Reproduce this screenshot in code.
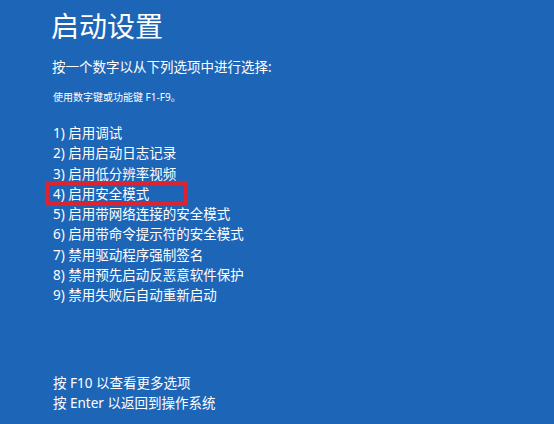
const options = [
    '1) 启用调试',
    '2) 启用启动日志记录',
    '3) 启用低分辨率视频',
    '4) 启用安全模式',
    '5) 启用带网络连接的安全模式',
    '6) 启用带命令提示符的安全模式',
    '7) 禁用驱动程序强制签名',
    '8) 禁用预先启动反恶意软件保护',
    '9) 禁用失败后自动重新启动',
]

export default function App() {
    return (
        <main
            className="w-[554px] h-[424px] overflow-hidden bg-[#1d65b7] text-white pl-[51px] pt-[10px]"
            style={{ fontFamily: '"Noto Sans", "Noto Sans CJK SC", sans-serif' }}
        >
            <h1 className="text-[28px] leading-[32px] font-normal">启动设置</h1>
            <p className="mt-[15px] text-[13.5px] leading-[20px] pl-[1px]">按一个数字以从下列选项中进行选择:</p>
            <p className="mt-[13px] text-[10px] leading-[14px] pl-[2px]">使用数字键或功能键 F1-F9。</p>

            <ul className="mt-[19px] pl-[2px]">
                {options.map((o, i) => (
                    <li key={o} className="text-[13.5px] leading-[20.3px]">
                        {i === 3 ? (
                            <span className="relative inline-block">
                                {o}
                                {/* highlight box drawn over the selected option */}
                                <span className="absolute -left-[8px] -top-[3px] w-[143px] h-[25px] border-[4px] border-[#dc2430]" />
                            </span>
                        ) : o}
                    </li>
                ))}
            </ul>

            <div className="mt-[67px] pl-[2px] text-[13.5px] leading-[20px]">
                <p>按 F10 以查看更多选项</p>
                <p>按 Enter 以返回到操作系统</p>
            </div>
        </main>
    )
}
